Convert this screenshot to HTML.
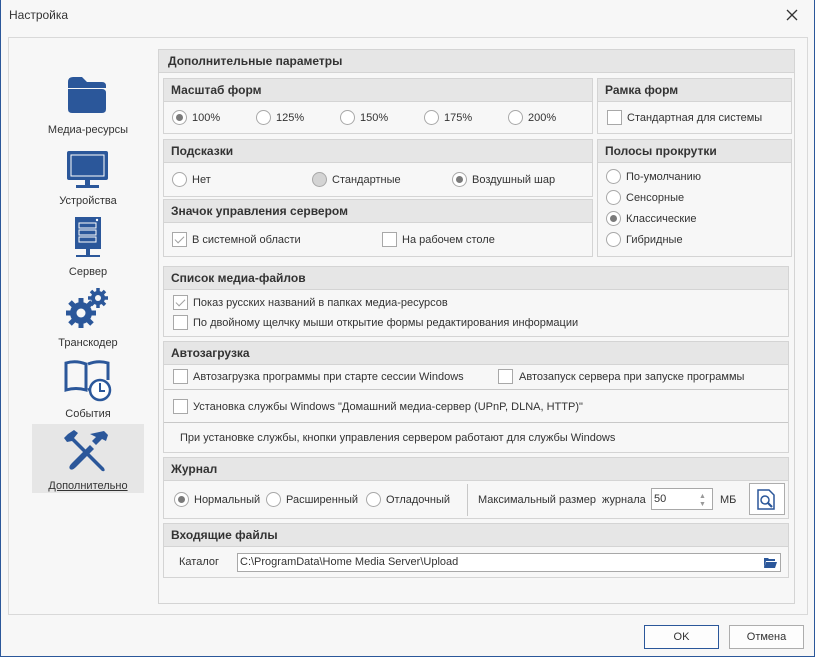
<!DOCTYPE html>
<html><head><meta charset="utf-8"><style>
*{box-sizing:border-box;margin:0;padding:0}
body{width:815px;height:657px;position:relative;background:#f7f7f7;font:11px "Liberation Sans","DejaVu Sans",sans-serif;color:#333;overflow:hidden}
.a{position:absolute}
.win{left:0;top:0;width:815px;height:657px;border:1px solid #2b579a;border-top:none}
.box{position:absolute;border:1px solid #d4d4d4;background:#f7f7f7}
.hd{position:absolute;left:0;right:0;top:0;height:23px;background:#e6e6e6;border-bottom:1px solid #d4d4d4;font-weight:bold;font-size:12px;padding:4px 0 0 7px;color:#333}
.t{position:absolute;white-space:nowrap;line-height:14px}
.r{position:absolute;width:15px;height:15px;border:1px solid #a8a8a8;border-radius:50%;background:#fff}
.r.on::after{content:"";position:absolute;left:3px;top:3px;width:7px;height:7px;border-radius:50%;background:#7a7a7a}
.r.dis{background:#d4d4d4}
.c{position:absolute;width:15px;height:15px;border:1px solid #a8a8a8;background:#fff}
.c.on::after{content:"";position:absolute;left:4px;top:1px;width:4px;height:8px;border:solid #a0a0a0;border-width:0 1.5px 1.5px 0;transform:rotate(45deg)}
.nav{position:absolute;width:112px;text-align:center;left:32px;font-size:11px;color:#333}
.btn{position:absolute;height:24px;border:1px solid #adadad;background:#fdfdfd;text-align:center;line-height:22px}
</style></head><body>
<div class="a win"></div>
<div class="t" style="left:9px;top:8px;font-size:12px;color:#333">Настройка</div>
<svg class="a" style="left:786px;top:9px" width="12" height="12"><path d="M1 1L11 11M11 1L1 11" stroke="#333" stroke-width="1.3"/></svg>
<div class="a" style="left:8px;top:37px;width:800px;height:578px;border:1px solid #d9d9d9;background:#f7f7f7"></div>

<!-- nav -->
<svg class="a" style="left:66px;top:76px" width="42" height="38"><path d="M2 6Q2 1 7 1H16L21 6H36Q40 6 40 10V12H2Z" fill="#2b579a"/><path d="M2 13H36Q40 13 40 17V33Q40 37 36 37H6Q2 37 2 33Z" fill="#2b579a"/></svg>
<div class="nav t" style="top:123px">Медиа-ресурсы</div>
<svg class="a" style="left:66px;top:150px" width="44" height="40"><rect x="1" y="1" width="41" height="29" rx="2" fill="#2b579a"/><rect x="5" y="5" width="33" height="21" fill="#2b579a" stroke="#fff" stroke-width="1"/><rect x="19" y="30" width="5" height="5" fill="#2b579a"/><rect x="10" y="35" width="23" height="3" fill="#2b579a"/></svg>
<div class="nav t" style="top:194px">Устройства</div>
<svg class="a" style="left:74px;top:216px" width="28" height="44"><rect x="1" y="1" width="26" height="32" fill="#2b579a"/><rect x="5" y="7" width="17" height="5" fill="none" stroke="#fff"/><rect x="5" y="14" width="17" height="5" fill="none" stroke="#fff"/><rect x="5" y="21" width="17" height="5" fill="none" stroke="#fff"/><circle cx="23" cy="4" r="1.2" fill="#fff"/><rect x="12" y="33" width="4" height="7" fill="#2b579a"/><rect x="2" y="39" width="24" height="2" fill="#2b579a"/></svg>
<div class="nav t" style="top:265px">Сервер</div>
<svg class="a" style="left:66px;top:286px" width="44" height="44"><g fill="#2b579a"><circle cx="15" cy="27" r="11"/><g stroke="#2b579a" stroke-width="5"><path d="M15 12V42M0 27H30M4 16L26 38M26 16L4 38"/></g><circle cx="15" cy="27" r="4.5" fill="#f7f7f7"/><circle cx="32" cy="12" r="7"/><g stroke="#2b579a" stroke-width="3.5"><path d="M32 2V22M22 12H42M25 5L39 19M39 5L25 19"/></g><circle cx="32" cy="12" r="3" fill="#f7f7f7"/></g></svg>
<div class="nav t" style="top:336px">Транскодер</div>
<svg class="a" style="left:64px;top:360px" width="48" height="42"><path d="M2 3Q12 0 22 4V30Q12 27 2 30Z" fill="none" stroke="#2b579a" stroke-width="3"/><path d="M24 4Q34 0 44 3V20M24 30Q28 28 32 28" fill="none" stroke="#2b579a" stroke-width="3"/><circle cx="36" cy="30" r="10" fill="#fff" stroke="#2b579a" stroke-width="2.5"/><path d="M36 23V31H41" fill="none" stroke="#2b579a" stroke-width="2"/></svg>
<div class="nav t" style="top:407px">События</div>
<div class="a" style="left:32px;top:424px;width:112px;height:69px;background:#e6e6e6"></div>
<svg class="a" style="left:64px;top:429px" width="48" height="44"><g fill="#2b579a"><path d="M4 5L10 1L14 4L10 9L40 39Q42 43 38 42L8 12L3 13L0 9Z"/><path d="M12 38L30 20L26 16L8 34Q4 38 6 40Q8 42 12 38Z"/><path d="M26 5L40 2L44 6L42 12L38 10L32 16L28 12L32 8Z"/></g></svg>
<div class="nav t" style="top:479px;text-decoration:underline">Дополнительно</div>

<!-- main group -->
<div class="box" style="left:158px;top:49px;width:637px;height:555px"><div class="hd" style="padding-left:9px">Дополнительные параметры</div></div>

<div class="box" style="left:163px;top:78px;width:430px;height:56px"><div class="hd">Масштаб форм</div></div>
<div class="r on" style="left:172px;top:110px"></div><div class="t" style="left:192px;top:111px">100%</div>
<div class="r" style="left:256px;top:110px"></div><div class="t" style="left:276px;top:111px">125%</div>
<div class="r" style="left:340px;top:110px"></div><div class="t" style="left:360px;top:111px">150%</div>
<div class="r" style="left:424px;top:110px"></div><div class="t" style="left:444px;top:111px">175%</div>
<div class="r" style="left:508px;top:110px"></div><div class="t" style="left:528px;top:111px">200%</div>

<div class="box" style="left:597px;top:78px;width:195px;height:56px"><div class="hd">Рамка форм</div></div>
<div class="c" style="left:607px;top:110px"></div><div class="t" style="left:627px;top:111px">Стандартная для системы</div>

<div class="box" style="left:163px;top:139px;width:430px;height:58px"><div class="hd">Подсказки</div></div>
<div class="r" style="left:172px;top:172px"></div><div class="t" style="left:192px;top:173px">Нет</div>
<div class="r dis" style="left:312px;top:172px"></div><div class="t" style="left:332px;top:173px">Стандартные</div>
<div class="r on" style="left:452px;top:172px"></div><div class="t" style="left:472px;top:173px">Воздушный шар</div>

<div class="box" style="left:163px;top:199px;width:430px;height:58px"><div class="hd">Значок управления сервером</div></div>
<div class="c on" style="left:172px;top:232px"></div><div class="t" style="left:192px;top:233px">В системной области</div>
<div class="c" style="left:382px;top:232px"></div><div class="t" style="left:402px;top:233px">На рабочем столе</div>

<div class="box" style="left:597px;top:139px;width:195px;height:118px"><div class="hd">Полосы прокрутки</div></div>
<div class="r" style="left:606px;top:169px"></div><div class="t" style="left:626px;top:170px">По-умолчанию</div>
<div class="r" style="left:606px;top:190px"></div><div class="t" style="left:626px;top:191px">Сенсорные</div>
<div class="r on" style="left:606px;top:211px"></div><div class="t" style="left:626px;top:212px">Классические</div>
<div class="r" style="left:606px;top:232px"></div><div class="t" style="left:626px;top:233px">Гибридные</div>

<div class="box" style="left:163px;top:266px;width:626px;height:71px"><div class="hd">Список медиа-файлов</div></div>
<div class="c on" style="left:173px;top:295px"></div><div class="t" style="left:193px;top:296px">Показ русских названий в папках медиа-ресурсов</div>
<div class="c" style="left:173px;top:315px"></div><div class="t" style="left:193px;top:316px">По двойному щелчку мыши открытие формы редактирования информации</div>

<div class="box" style="left:163px;top:341px;width:626px;height:112px"><div class="hd">Автозагрузка</div></div>
<div class="c" style="left:173px;top:369px"></div><div class="t" style="left:193px;top:370px">Автозагрузка программы при старте сессии Windows</div>
<div class="c" style="left:498px;top:369px"></div><div class="t" style="left:519px;top:370px">Автозапуск сервера при запуске программы</div>
<div class="a" style="left:164px;top:389px;width:624px;height:1px;background:#c8c8c8"></div>
<div class="c" style="left:173px;top:399px"></div><div class="t" style="left:193px;top:400px">Установка службы Windows "Домашний медиа-сервер (UPnP, DLNA, HTTP)"</div>
<div class="a" style="left:164px;top:422px;width:624px;height:1px;background:#c8c8c8"></div>
<div class="t" style="left:180px;top:431px">При установке службы, кнопки управления сервером работают для службы Windows</div>

<div class="box" style="left:163px;top:457px;width:626px;height:62px"><div class="hd">Журнал</div></div>
<div class="r on" style="left:174px;top:492px"></div><div class="t" style="left:194px;top:493px">Нормальный</div>
<div class="r" style="left:266px;top:492px"></div><div class="t" style="left:286px;top:493px">Расширенный</div>
<div class="r" style="left:366px;top:492px"></div><div class="t" style="left:386px;top:493px">Отладочный</div>
<div class="a" style="left:467px;top:484px;width:1px;height:32px;background:#c8c8c8"></div>
<div class="t" style="left:478px;top:493px">Максимальный размер&nbsp; журнала</div>
<div class="a" style="left:651px;top:488px;width:62px;height:22px;border:1px solid #a8a8a8;background:#fff;padding:4px 0 0 2px">50</div>
<div class="t" style="left:699px;top:490px;font-size:7px;color:#999">▲</div><div class="t" style="left:699px;top:498px;font-size:7px;color:#999">▼</div>
<div class="t" style="left:720px;top:493px">МБ</div>
<div class="a" style="left:749px;top:483px;width:36px;height:32px;border:1px solid #adadad;background:#fff"></div>
<svg class="a" style="left:757px;top:489px" width="20" height="22"><path d="M1 1H12L17 6V20H1Z" fill="#fff" stroke="#2b579a" stroke-width="1.5"/><circle cx="8" cy="11" r="4" fill="none" stroke="#2b579a" stroke-width="1.5"/><path d="M11 14L15 18" stroke="#2b579a" stroke-width="2.2"/></svg>

<div class="box" style="left:163px;top:523px;width:626px;height:55px"><div class="hd">Входящие файлы</div></div>
<div class="t" style="left:179px;top:555px">Каталог</div>
<div class="a" style="left:237px;top:553px;width:544px;height:19px;border:1px solid #a8a8a8;background:#fff;padding:2px 0 0 2px">C:\ProgramData\Home Media Server\Upload</div>
<svg class="a" style="left:763px;top:556px" width="15" height="13"><path d="M1 2H5L6 3H12V5H3L1 12Z" fill="#2b579a"/><path d="M3 6H14L12 12H1Z" fill="#2b579a"/></svg>

<div class="btn" style="left:644px;top:625px;width:75px;border-color:#2b579a">OK</div>
<div class="btn" style="left:729px;top:625px;width:75px">Отмена</div>
</body></html>
